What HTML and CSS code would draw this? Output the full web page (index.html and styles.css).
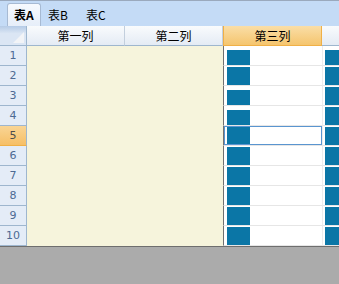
FILE: index.html
```html
<!DOCTYPE html>
<html>
<head>
<meta charset="utf-8">
<link rel="stylesheet" href="styles.css">
</head>
<body>
<div class="tabs">
  <div class="tab active">表A</div>
  <div class="tab">表B</div>
  <div class="tab">表C</div>
</div>
<div class="grid">
  <div class="row head">
    <div class="corner"><span class="tri"></span></div>
    <div class="ch">第一列</div>
    <div class="ch">第二列</div>
    <div class="ch sel">第三列</div>
    <div class="ch rest"></div>
  </div>
  <div class="row"><div class="rh">1</div><div class="beige"></div><div class="c3"><span class="sq short1"></span></div><div class="c4"><span class="sq short1"></span></div></div>
  <div class="row"><div class="rh">2</div><div class="beige"></div><div class="c3"><span class="sq"></span></div><div class="c4"><span class="sq"></span></div></div>
  <div class="row"><div class="rh">3</div><div class="beige"></div><div class="c3"><span class="sq short"></span></div><div class="c4"><span class="sq"></span></div></div>
  <div class="row"><div class="rh">4</div><div class="beige"></div><div class="c3"><span class="sq short"></span></div><div class="c4"><span class="sq"></span></div></div>
  <div class="row"><div class="rh selh">5</div><div class="beige"></div><div class="c3 cur"><span class="sq"></span></div><div class="c4"><span class="sq"></span></div></div>
  <div class="row"><div class="rh">6</div><div class="beige"></div><div class="c3"><span class="sq"></span></div><div class="c4"><span class="sq"></span></div></div>
  <div class="row"><div class="rh">7</div><div class="beige"></div><div class="c3"><span class="sq"></span></div><div class="c4"><span class="sq"></span></div></div>
  <div class="row"><div class="rh">8</div><div class="beige"></div><div class="c3"><span class="sq"></span></div><div class="c4"><span class="sq"></span></div></div>
  <div class="row"><div class="rh">9</div><div class="beige"></div><div class="c3"><span class="sq"></span></div><div class="c4"><span class="sq"></span></div></div>
  <div class="row"><div class="rh">10</div><div class="beige"></div><div class="c3"><span class="sq"></span></div><div class="c4"><span class="sq"></span></div></div>
</div>
</body>
</html>
```
FILE: styles.css
```css
html, body {
  margin: 0;
  padding: 0;
}
body {
  width: 339px;
  height: 284px;
  overflow: hidden;
  background: #ababab;
  font-family: "Noto Sans CJK SC", "DejaVu Sans", sans-serif;
  font-size: 12px;
  color: #000;
}
.tabs {
  height: 26px;
  box-sizing: border-box;
  border-top: 1px solid #9aa9bd;
  background: #c4dbf6;
  display: flex;
  align-items: flex-end;
  padding-left: 7px;
}
.tab {
  height: 22px;
  line-height: 21px;
  padding: 0 5px 0 6px;
  margin-right: 2px;
  box-sizing: border-box;
  white-space: nowrap;
}
.tab.active {
  font-weight: bold;
  width: 34px;
  background: linear-gradient(#f7fafe, #e6eef9);
  border: 1px solid #a7bad3;
  border-bottom: none;
  border-radius: 3px 3px 0 0;
  height: 23px;
}
.tab + .tab {
  padding-left: 5px;
  width: 36px;
}
.grid {
  background: #fff;
  border-bottom: 1px solid #6e6e6e;
}
.row {
  display: flex;
  height: 20px;
}
.head .corner {
  width: 27px;
  flex: none;
  box-sizing: border-box;
  background: linear-gradient(#b5cbe6, #dbe6f4 40%, #dbe6f4);
  border-right: 1px solid #9eb6ce;
  border-bottom: 1px solid #9eb6ce;
  position: relative;
}
.tri {
  position: absolute;
  right: 2px;
  bottom: 2px;
  width: 0;
  height: 0;
  border-left: 11px solid transparent;
  border-bottom: 11px solid #f2f4f7;
}
.ch {
  width: 98px;
  flex: none;
  box-sizing: border-box;
  text-align: center;
  line-height: 19px;
  background: linear-gradient(#f9fbfd, #e4ebf4);
  border-right: 1px solid #c3cfdd;
  border-bottom: 1px solid #9eb6ce;
}
.ch.sel {
  width: 99px;
  background: linear-gradient(#fadea7, #f5c56e);
  border-left: 1px solid #f0b046;
  border-right: 1px solid #f0b046;
  border-bottom: 1px solid #f0b046;
}
.ch.rest {
  flex: 1;
  width: auto;
  border-right: none;
}
.rh {
  width: 27px;
  flex: none;
  box-sizing: border-box;
  text-align: center;
  line-height: 19px;
  color: #4d6a93;
  background: #e4ecf7;
  border-right: 1px solid #9eb6ce;
  border-bottom: 1px solid #9eb6ce;
  font-family: "DejaVu Sans", sans-serif;
  font-size: 11px;
}
.rh.selh {
  background: linear-gradient(#f9d595, #f6bf66);
  color: #4d4d4d;
  border-bottom-color: #f0b046;
}
.beige {
  width: 196px;
  flex: none;
  background: #f6f4dc;
}
.c3 {
  width: 99px;
  flex: none;
  box-sizing: border-box;
  border-left: 1px solid #707070;
  border-bottom: 1px solid #e6e6e6;
  padding-left: 3px;
  position: relative;
}
.c3.cur::after {
  content: "";
  position: absolute;
  left: 0;
  top: 0;
  right: 0;
  bottom: 0;
  border: 1px solid #5a95d0;
}
.c4 {
  flex: 1;
  box-sizing: border-box;
  border-left: 1px solid #ececec;
  border-bottom: 1px solid #e6e6e6;
  padding-left: 2px;
}
.sq {
  display: block;
  width: 23px;
  height: 18px;
  margin-top: 1px;
  background: #0b76a6;
}
.c4 .sq {
  width: 20px;
}
.sq.short {
  margin-top: 4px;
  height: 15px;
}
.sq.short1 {
  margin-top: 4px;
  height: 15px;
}
```
